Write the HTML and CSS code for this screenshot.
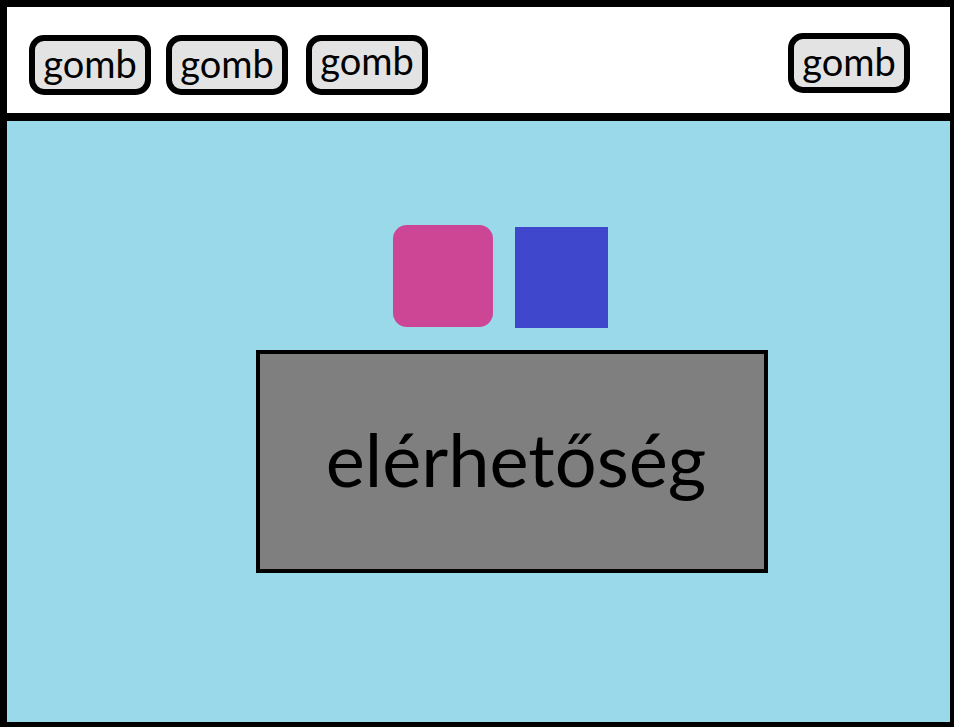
FILE: index.html
```html
<!DOCTYPE html>
<html lang="hu">
<head>
<meta charset="utf-8">
<title>Oldal</title>
<link rel="stylesheet" href="styles.css">
</head>
<body>
<div class="frame">
  <header class="topbar">
    <button class="btn">gomb</button>
    <button class="btn">gomb</button>
    <button class="btn btn-high">gomb</button>
    <button class="btn btn-right">gomb</button>
  </header>
  <main class="content">
    <div class="tiles">
      <div class="tile tile-pink"></div>
      <div class="tile tile-blue"></div>
    </div>
    <div class="contact">elérhetőség</div>
  </main>
</div>
</body>
</html>
```

FILE: styles.css
```css
html, body {
  margin: 0;
  padding: 0;
  width: 954px;
  height: 727px;
  overflow: hidden;
  font-family: Lato, "Open Sans", sans-serif;
}

.frame {
  box-sizing: border-box;
  width: 954px;
  height: 727px;
  border-style: solid;
  border-color: #000;
  border-width: 7px 4px 5px 7px;
  display: flex;
  flex-direction: column;
  background: #99d9ea;
}

.topbar {
  flex: none;
  box-sizing: border-box;
  background: #fff;
  border-bottom: 8px solid #000;
  height: 114px;
  display: flex;
  align-items: flex-start;
  padding: 28px 40px 0 22px;
  gap: 15px;
}

.btn {
  box-sizing: border-box;
  width: 122px;
  height: 60px;
  border: 6px solid #000;
  border-radius: 15px;
  background: #e3e3e3;
  font-family: Lato, "Open Sans", sans-serif;
  font-size: 38px;
  color: #000;
  padding: 0 0 4px 0;
  line-height: 1;
  display: flex;
  align-items: center;
  justify-content: center;
}

.btn:nth-child(3) {
  margin-left: 3px;
}

.btn-high {
  padding-bottom: 10px;
}

.btn-right {
  margin-left: auto;
  margin-top: -2px;
}

.content {
  flex: 1;
  display: flex;
  flex-direction: column;
  align-items: flex-start;
  padding-top: 104px;
}

.tiles {
  display: flex;
  align-items: flex-start;
  margin-left: 386px;
  gap: 22px;
}

.tile {
  flex: none;
}

.tile-pink {
  width: 100px;
  height: 102px;
  border-radius: 14px;
  background: #cc4695;
}

.tile-blue {
  width: 93px;
  height: 101px;
  margin-top: 2px;
  background: #3f48cc;
}

.contact {
  box-sizing: border-box;
  margin-left: 249px;
  margin-top: 22px;
  width: 512px;
  height: 223px;
  border: 4px solid #000;
  background: #7f7f7f;
  display: flex;
  align-items: center;
  justify-content: center;
  font-size: 74px;
  line-height: 1;
  color: #000;
  padding: 0 0 6px 8px;
}
```
